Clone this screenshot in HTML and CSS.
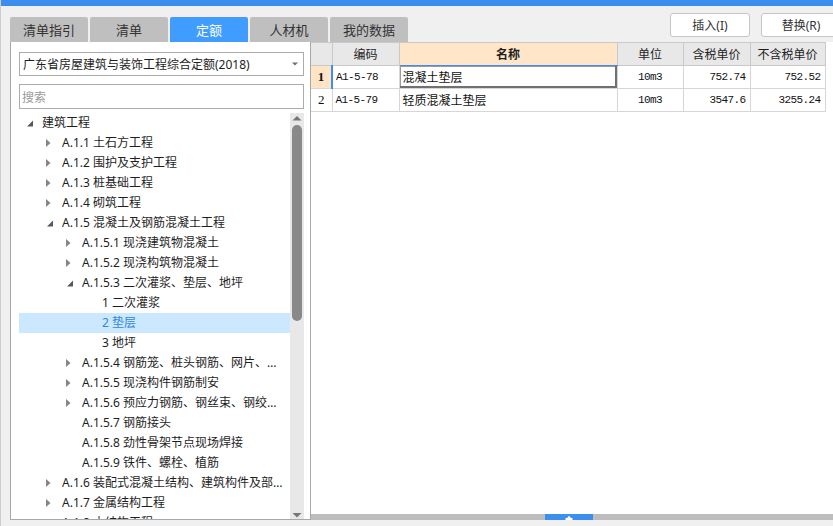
FILE: index.html
```html
<!DOCTYPE html>
<html lang="zh-CN">
<head>
<meta charset="utf-8">
<title>定额</title>
<link rel="stylesheet" href="styles.css">
</head>
<body>
<div class="app">
  <div class="topbar"></div>
  <div class="toolbar">
    <div class="tabs">
      <div class="tab">清单指引</div>
      <div class="tab">清单</div>
      <div class="tab active">定额</div>
      <div class="tab">人材机</div>
      <div class="tab">我的数据</div>
    </div>
    <div class="actions">
      <button class="btn">插入(I)</button>
      <button class="btn">替换(R)</button>
    </div>
  </div>
  <div class="main">
    <div class="left">
      <div class="combo">
        <span class="combo-text">广东省房屋建筑与装饰工程综合定额(2018)</span>
        <svg class="caret" width="6" height="4" viewBox="0 0 6 4"><path d="M0 0.5H6L3 3.5Z"/></svg>
      </div>
      <div class="search">搜索</div>
      <div class="treewrap">
        <div class="tree">
          <div class="row l0"><span class="tg"><svg class="ex" viewBox="0 0 20 20" width="20" height="20"><path d="M11 7.5V13.5H5Z"/></svg></span><span class="tx">建筑工程</span></div>
          <div class="row l1"><span class="tg"><svg class="co" viewBox="0 0 20 20" width="20" height="20"><path d="M4 6L8.5 10L4 14Z"/></svg></span><span class="tx">A.1.1 土石方工程</span></div>
          <div class="row l1"><span class="tg"><svg class="co" viewBox="0 0 20 20" width="20" height="20"><path d="M4 6L8.5 10L4 14Z"/></svg></span><span class="tx">A.1.2 围护及支护工程</span></div>
          <div class="row l1"><span class="tg"><svg class="co" viewBox="0 0 20 20" width="20" height="20"><path d="M4 6L8.5 10L4 14Z"/></svg></span><span class="tx">A.1.3 桩基础工程</span></div>
          <div class="row l1"><span class="tg"><svg class="co" viewBox="0 0 20 20" width="20" height="20"><path d="M4 6L8.5 10L4 14Z"/></svg></span><span class="tx">A.1.4 砌筑工程</span></div>
          <div class="row l1"><span class="tg"><svg class="ex" viewBox="0 0 20 20" width="20" height="20"><path d="M11 7.5V13.5H5Z"/></svg></span><span class="tx">A.1.5 混凝土及钢筋混凝土工程</span></div>
          <div class="row l2"><span class="tg"><svg class="co" viewBox="0 0 20 20" width="20" height="20"><path d="M4 6L8.5 10L4 14Z"/></svg></span><span class="tx">A.1.5.1 现浇建筑物混凝土</span></div>
          <div class="row l2"><span class="tg"><svg class="co" viewBox="0 0 20 20" width="20" height="20"><path d="M4 6L8.5 10L4 14Z"/></svg></span><span class="tx">A.1.5.2 现浇构筑物混凝土</span></div>
          <div class="row l2"><span class="tg"><svg class="ex" viewBox="0 0 20 20" width="20" height="20"><path d="M11 7.5V13.5H5Z"/></svg></span><span class="tx">A.1.5.3 二次灌浆、垫层、地坪</span></div>
          <div class="row l3"><span class="tg"></span><span class="tx">1 二次灌浆</span></div>
          <div class="row l3 selected"><span class="tg"></span><span class="tx">2 垫层</span></div>
          <div class="row l3"><span class="tg"></span><span class="tx">3 地坪</span></div>
          <div class="row l2"><span class="tg"><svg class="co" viewBox="0 0 20 20" width="20" height="20"><path d="M4 6L8.5 10L4 14Z"/></svg></span><span class="tx">A.1.5.4 钢筋笼、桩头钢筋、网片、网架制作安装</span></div>
          <div class="row l2"><span class="tg"><svg class="co" viewBox="0 0 20 20" width="20" height="20"><path d="M4 6L8.5 10L4 14Z"/></svg></span><span class="tx">A.1.5.5 现浇构件钢筋制安</span></div>
          <div class="row l2"><span class="tg"><svg class="co" viewBox="0 0 20 20" width="20" height="20"><path d="M4 6L8.5 10L4 14Z"/></svg></span><span class="tx">A.1.5.6 预应力钢筋、钢丝束、钢绞线制作安装</span></div>
          <div class="row l2"><span class="tg"></span><span class="tx">A.1.5.7 钢筋接头</span></div>
          <div class="row l2"><span class="tg"></span><span class="tx">A.1.5.8 劲性骨架节点现场焊接</span></div>
          <div class="row l2"><span class="tg"></span><span class="tx">A.1.5.9 铁件、螺栓、植筋</span></div>
          <div class="row l1"><span class="tg"><svg class="co" viewBox="0 0 20 20" width="20" height="20"><path d="M4 6L8.5 10L4 14Z"/></svg></span><span class="tx">A.1.6 装配式混凝土结构、建筑构件及部品工程</span></div>
          <div class="row l1"><span class="tg"><svg class="co" viewBox="0 0 20 20" width="20" height="20"><path d="M4 6L8.5 10L4 14Z"/></svg></span><span class="tx">A.1.7 金属结构工程</span></div>
          <div class="row l1"><span class="tg"><svg class="co" viewBox="0 0 20 20" width="20" height="20"><path d="M4 6L8.5 10L4 14Z"/></svg></span><span class="tx">A.1.8 木结构工程</span></div>
        </div>
        <div class="vscroll">
          <svg class="sarrow" width="14" height="12" viewBox="0 0 14 12"><path d="M2.5 7.5L7 3L11.5 7.5Z"/></svg>
          <div class="thumb"></div>
          <svg class="sarrow down" width="14" height="10" viewBox="0 0 14 10"><path d="M2.5 4H11.5L7 8.5Z"/></svg>
        </div>
      </div>
    </div>
    <div class="right">
      <table class="grid">
        <colgroup>
          <col class="c-no"><col class="c-code"><col class="c-name"><col class="c-unit"><col class="c-p1"><col class="c-p2">
        </colgroup>
        <thead>
          <tr>
            <th class="no"></th>
            <th>编码</th>
            <th class="selcol">名称</th>
            <th>单位</th>
            <th>含税单价</th>
            <th>不含税单价</th>
          </tr>
        </thead>
        <tbody>
          <tr>
            <td class="no currow">1</td>
            <td class="code">A1-5-78</td>
            <td class="name focus">混凝土垫层</td>
            <td class="unit">10m3</td>
            <td class="num">752.74</td>
            <td class="num">752.52</td>
          </tr>
          <tr>
            <td class="no">2</td>
            <td class="code">A1-5-79</td>
            <td class="name">轻质混凝土垫层</td>
            <td class="unit">10m3</td>
            <td class="num">3547.6</td>
            <td class="num">3255.24</td>
          </tr>
        </tbody>
      </table>
      <div class="hbar">
        <div class="handle">
          <svg width="8" height="5" viewBox="0 0 8 5"><path d="M2 3L4 0.8L6 3Z"/><rect x="0.5" y="3" width="7" height="2"/></svg>
        </div>
      </div>
    </div>
  </div>
  <div class="bottomstrip"></div>
</div>
</body>
</html>
```
FILE: styles.css
```css
html, body {
  margin: 0;
  padding: 0;
}
body {
  width: 833px;
  height: 526px;
  overflow: hidden;
  background: #f0f0f0;
  font-family: "Noto Sans", "Noto Sans CJK SC", sans-serif;
  font-size: 12px;
  color: #222;
}
.app {
  height: 526px;
  display: flex;
  flex-direction: column;
  border-left: 1px solid #cdcdcd;
  box-sizing: border-box;
}
.topbar {
  height: 6px;
  background: #3b8dee;
  flex: none;
}
.toolbar {
  height: 36px;
  flex: none;
  display: flex;
  align-items: flex-end;
  padding-left: 9px;
}
.tabs {
  display: flex;
  gap: 2px;
}
.tab {
  width: 78px;
  height: 25px;
  background: #bfbfbf;
  border-radius: 2px 2px 0 0;
  display: flex;
  align-items: center;
  justify-content: center;
  font-size: 13px;
  color: #333;
}
.tab.active {
  background: #409cff;
  color: #fff;
}
.actions {
  margin-left: auto;
  margin-right: -8px;
  align-self: flex-start;
  margin-top: 7px;
  display: flex;
  gap: 11px;
}
.btn {
  width: 80px;
  height: 24px;
  box-sizing: border-box;
  border: 1px solid #c6c6c6;
  border-radius: 3px;
  background: #fff;
  font-family: "Noto Sans", "Noto Sans CJK SC", sans-serif;
  font-size: 12px;
  color: #333;
  padding: 0;
}
.main {
  flex: 1;
  min-height: 0;
  display: flex;
  padding-left: 9px;
}
.bottomstrip {
  height: 6px;
  flex: none;
}
.left {
  width: 301px;
  flex: none;
  box-sizing: border-box;
  background: #fff;
  border-left: 1px solid #a8a8a8;
  border-right: 1px solid #a8a8a8;
  border-bottom: 1px solid #a8a8a8;
  display: flex;
  flex-direction: column;
  min-height: 0;
}
.combo {
  margin: 10px 6px 0 8px;
  height: 24px;
  box-sizing: border-box;
  border: 1px solid #acacac;
  display: flex;
  align-items: center;
  padding-left: 3px;
  flex: none;
}
.combo-text {
  white-space: nowrap;
  color: #1e1e1e;
}
.caret {
  margin-left: auto;
  margin-right: 5px;
  fill: #707070;
}
.search {
  margin: 8px 6px 0 8px;
  height: 25px;
  box-sizing: border-box;
  border: 1px solid #acacac;
  padding-left: 2px;
  color: #9a9a9a;
  display: flex;
  align-items: center;
  flex: none;
}
.treewrap {
  flex: 1;
  min-height: 0;
  display: flex;
  margin: 4px 5px 0 8px;
}
.tree {
  width: 271px;
  overflow: hidden;
}
.row {
  height: 20px;
  display: flex;
  align-items: center;
  padding-right: 4px;
  line-height: 20px;
}
.row.l0 { padding-left: 3px; }
.row.l1 { padding-left: 23px; }
.row.l2 { padding-left: 43px; }
.row.l3 { padding-left: 63px; }
.tg {
  width: 20px;
  height: 20px;
  flex: none;
}
.tg svg { display: block; }
.tg .co { fill: #858585; }
.tg .ex { fill: #585858; }
.tx {
  flex: 1;
  min-width: 0;
  overflow: hidden;
  white-space: nowrap;
  text-overflow: ellipsis;
  color: #1e1e1e;
}
.row.selected {
  background: #cce8ff;
}
.row.selected .tx {
  color: #2f86e0;
}
.vscroll {
  width: 14px;
  flex: none;
  background: #e8e8e8;
  display: flex;
  flex-direction: column;
  align-items: center;
}
.sarrow {
  fill: #777;
  display: block;
  flex: none;
}
.sarrow.down {
  margin-top: auto;
}
.thumb {
  width: 10px;
  height: 196px;
  border-radius: 5px;
  background: #898989;
  flex: none;
}
.right {
  flex: 1;
  min-width: 0;
  background: #fff;
  display: flex;
  flex-direction: column;
}
.grid {
  border-collapse: collapse;
  table-layout: fixed;
  width: 514px;
  border-top: 1px solid #d2d2d2;
}
.c-no { width: 21px; }
.c-code { width: 67px; }
.c-name { width: 218px; }
.c-unit { width: 66px; }
.c-p1 { width: 67px; }
.c-p2 { width: 75px; }
.grid tr {
  height: 23px;
}
.grid th {
  background: #e8e8e8;
  border: 1px solid #c9c9c9;
  font-weight: normal;
  font-size: 12px;
  color: #1e1e1e;
  padding: 0;
  text-align: center;
  white-space: nowrap;
}
.grid th.selcol {
  background: #ffe6c9;
  font-weight: bold;
  border-bottom: 1px solid #3d8fef;
}
.grid td {
  border: 1px solid #d6d6d6;
  padding: 0 3px;
  white-space: nowrap;
  overflow: hidden;
  color: #111;
}
.grid th:first-child,
.grid td:first-child {
  border-left: none;
}
.grid td.no {
  padding: 0;
  text-align: center;
  font-family: "Liberation Serif", serif;
  font-size: 13px;
}
.grid td.currow {
  background: #ffe4c6;
  font-weight: bold;
  border-right: 2px solid #3d8fef;
}
.grid td.code,
.grid td.unit,
.grid td.num {
  font-family: "Liberation Mono", monospace;
  font-size: 11px;
  letter-spacing: -0.6px;
}
.grid td.unit {
  text-align: center;
}
.grid td.num {
  text-align: right;
  padding-right: 4px;
}
.grid td.name {
  font-size: 12px;
}
.grid td.focus {
  box-shadow: inset -2px -2px 0 #707070, inset 1px 1px 0 #9c9c9c;
}
.hbar {
  margin-top: auto;
  height: 6px;
  flex: none;
  background: #bdbdbd;
  display: flex;
  justify-content: center;
  padding-right: 6px;
}
.handle {
  width: 48px;
  background: #3d8fef;
  display: flex;
  align-items: flex-end;
  justify-content: center;
  fill: #fff;
}
.handle svg {
  display: block;
}
```
